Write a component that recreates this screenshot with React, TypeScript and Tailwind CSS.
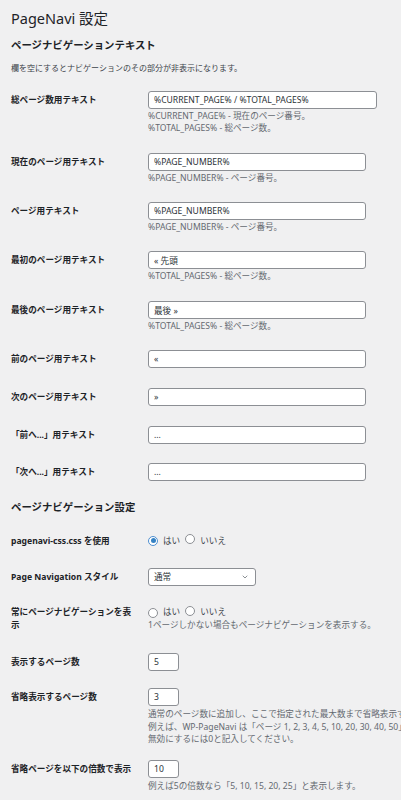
import { ChevronDown } from "lucide-react";

const font = "font-['Noto_Sans','Noto_Sans_CJK_JP',sans-serif]";

type TextRowProps = {
  label: string;
  value: string;
  wide?: boolean;
  desc?: string[];
  mt: string;
};

function Label({ children, className = "" }: { children: React.ReactNode; className?: string }) {
  return (
    <div className={`mr-[11px] w-[126px] shrink-0 text-[8.6px] font-bold text-[#1d2327] ${className}`}>
      {children}
    </div>
  );
}

function TextInput({ value, width }: { value: string; width: string }) {
  return (
    <input
      readOnly
      value={value}
      className={`block h-[18px] ${width} rounded-[3px] border border-[#8c8f94] bg-white px-[5px] text-[8.6px] text-[#2c3338] outline-none`}
    />
  );
}

function TextRow({ label, value, wide, desc, mt }: TextRowProps) {
  return (
    <div className={`flex items-start ${mt}`}>
      <Label className="leading-[18px]">{label}</Label>
      <div className="min-w-0 flex-1">
        <TextInput value={value} width={wide ? "w-[229px]" : "w-[218px]"} />
        {desc ? (
          <div className="mt-[1px] text-[8.6px] leading-[12px] text-[#646970]">
            {desc.map((d) => (
              <div key={d}>{d}</div>
            ))}
          </div>
        ) : null}
      </div>
    </div>
  );
}

function Radio({ checked }: { checked?: boolean }) {
  return (
    <span
      className={`inline-flex h-[10px] w-[10px] shrink-0 items-center justify-center rounded-full border bg-white ${
        checked ? "border-[#4f8fd0]" : "border-[#8c8f94]"
      }`}
    >
      {checked ? <span className="h-[5px] w-[5px] rounded-full bg-[#3582c4]" /> : null}
    </span>
  );
}

// はい / いいえ radio pair
function YesNo({ yes }: { yes?: boolean }) {
  return (
    <div className="flex items-center text-[8.6px] text-[#3c434a]">
      <Radio checked={yes === true} />
      <span className="ml-[5px]">はい</span>
      <span className="ml-[5px]">
        <Radio checked={yes === false} />
      </span>
      <span className="ml-[5px]">いいえ</span>
    </div>
  );
}

const textRows: TextRowProps[] = [
  {
    label: "総ページ数用テキスト",
    value: "%CURRENT_PAGE% / %TOTAL_PAGES%",
    wide: true,
    desc: ["%CURRENT_PAGE% - 現在のページ番号。", "%TOTAL_PAGES% - 総ページ数。"],
    mt: "mt-[17px]",
  },
  { label: "現在のページ用テキスト", value: "%PAGE_NUMBER%", desc: ["%PAGE_NUMBER% - ページ番号。"], mt: "mt-[19px]" },
  { label: "ページ用テキスト", value: "%PAGE_NUMBER%", desc: ["%PAGE_NUMBER% - ページ番号。"], mt: "mt-[18px]" },
  { label: "最初のページ用テキスト", value: "« 先頭", desc: ["%TOTAL_PAGES% - 総ページ数。"], mt: "mt-[18px]" },
  { label: "最後のページ用テキスト", value: "最後 »", desc: ["%TOTAL_PAGES% - 総ページ数。"], mt: "mt-[19px]" },
  { label: "前のページ用テキスト", value: "«", mt: "mt-[18px]" },
  { label: "次のページ用テキスト", value: "»", mt: "mt-[20px]" },
  { label: "「前へ...」用テキスト", value: "...", mt: "mt-[20px]" },
  { label: "「次へ...」用テキスト", value: "...", mt: "mt-[19px]" },
];

export default function App() {
  return (
    <div className={`min-h-[800px] w-[401px] overflow-hidden bg-[#f0f0f1] px-[11px] pt-[8px] text-[#1d2327] ${font}`}>
      <h1 className="text-[14.5px] font-normal leading-[20px] text-[#1d2327]">PageNavi 設定</h1>

      <h2 className="mt-[9px] text-[10.4px] font-bold leading-[16px]">ページナビゲーションテキスト</h2>
      <p className="mt-[9px] text-[8px] leading-[12px] text-[#3c434a]">
        欄を空にするとナビゲーションのその部分が非表示になります。
      </p>

      {textRows.map((row) => (
        <TextRow key={row.label} {...row} />
      ))}

      <h2 className="mt-[18px] text-[10.4px] font-bold leading-[16px]">ページナビゲーション設定</h2>

      <div className="mt-[17px] flex items-start">
        <Label className="leading-[18px]">pagenavi-css.css を使用</Label>
        <div className="flex h-[18px] items-center">
          <YesNo yes />
        </div>
      </div>

      <div className="mt-[18px] flex items-start">
        <Label className="leading-[18px]">Page Navigation スタイル</Label>
        <div className="flex h-[18px] w-[108px] items-center justify-between rounded-[3px] border border-[#8c8f94] bg-white pl-[5px] pr-[6px] text-[8.6px] text-[#2c3338]">
          <span>通常</span>
          <ChevronDown size={8} strokeWidth={2} className="text-[#50575e]" />
        </div>
      </div>

      <div className="mt-[20px] flex items-start">
        <Label className="leading-[13px]">常にページナビゲーションを表示</Label>
        <div className="min-w-0 flex-1">
          <div className="flex h-[13px] items-center">
            <YesNo />
          </div>
          <div className="whitespace-nowrap text-[8.6px] leading-[13px] text-[#646970]">
            1ページしかない場合もページナビゲーションを表示する。
          </div>
        </div>
      </div>

      <div className="mt-[21px] flex items-start">
        <Label className="leading-[18px]">表示するページ数</Label>
        <TextInput value="5" width="w-[31px]" />
      </div>

      <div className="mt-[17px] flex items-start">
        <Label className="leading-[18px]">省略表示するページ数</Label>
        <div className="min-w-0 flex-1">
          <TextInput value="3" width="w-[31px]" />
          <div className="mt-[2px] whitespace-nowrap text-[8.6px] leading-[12.5px] text-[#646970]">
            <div>通常のページ数に追加し、ここで指定された最大数まで省略表示するページ数を表示します。</div>
            <div>例えば、WP-PageNavi は「ページ 1, 2, 3, 4, 5, 10, 20, 30, 40, 50」を表示します。</div>
            <div>無効にするには0と記入してください。</div>
          </div>
        </div>
      </div>

      <div className="mt-[14px] flex items-start">
        <Label className="leading-[18px]">省略ページを以下の倍数で表示</Label>
        <div className="min-w-0 flex-1">
          <TextInput value="10" width="w-[31px]" />
          <div className="mt-[2px] whitespace-nowrap text-[8.6px] leading-[12px] text-[#646970]">
            例えば5の倍数なら「5, 10, 15, 20, 25」と表示します。
          </div>
        </div>
      </div>
    </div>
  );
}
